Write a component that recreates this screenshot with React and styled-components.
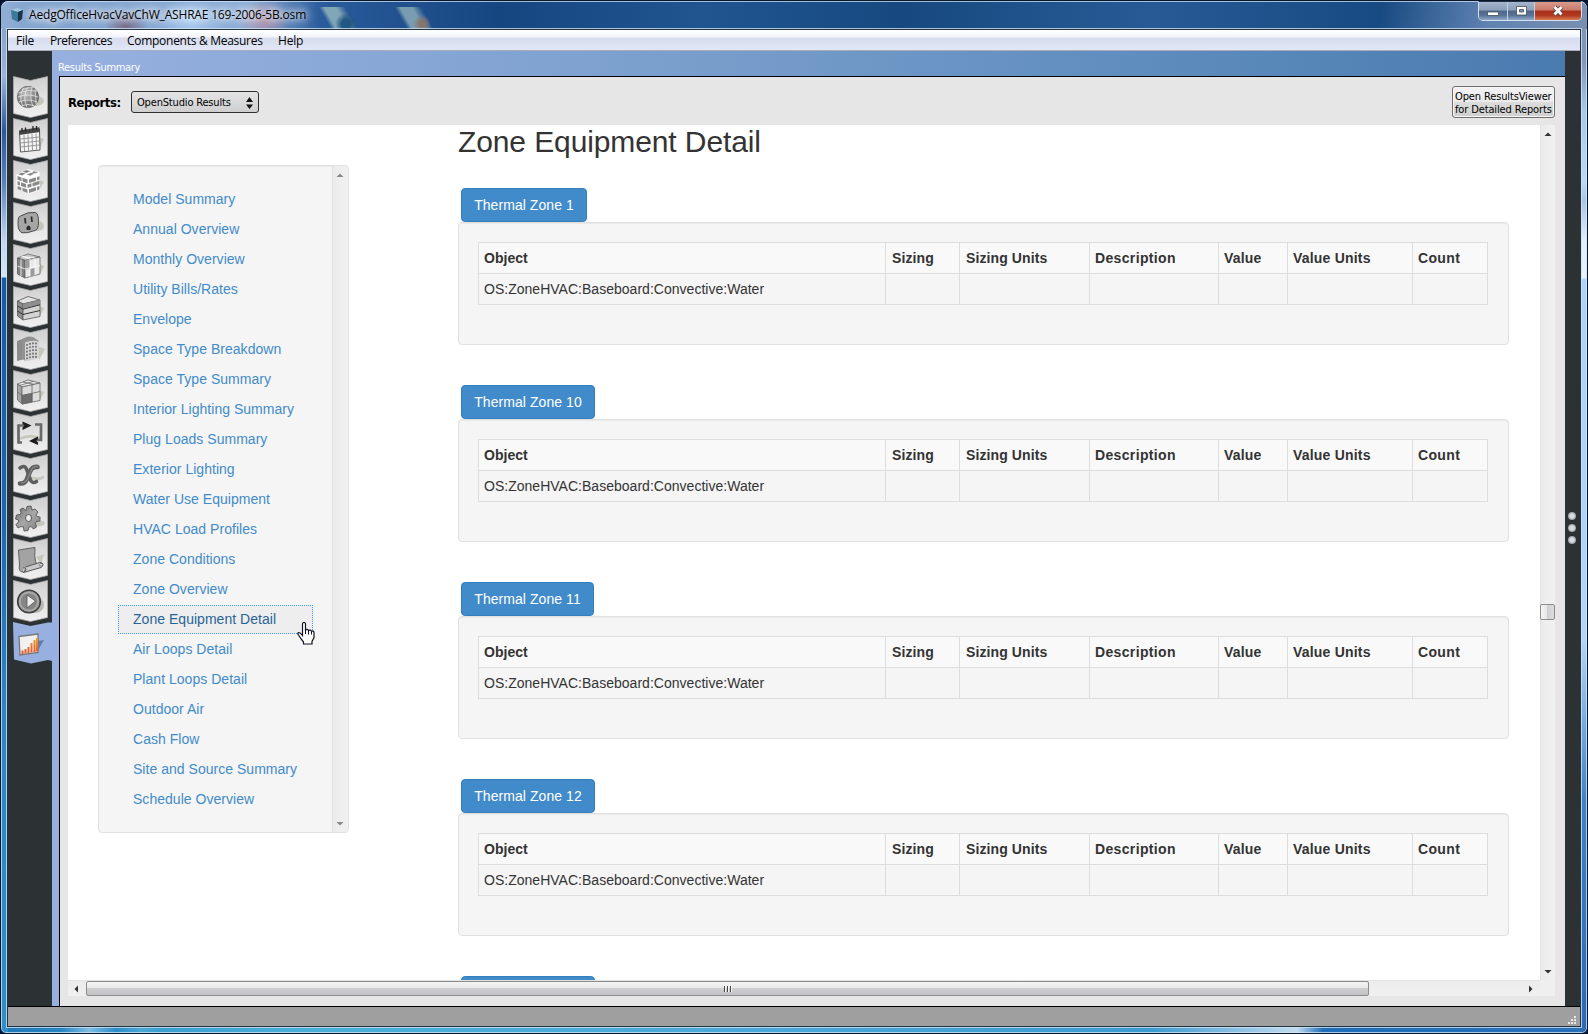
import React from "react";
import styled, { createGlobalStyle, css } from "styled-components";

const GlobalStyle = createGlobalStyle`
  * { box-sizing: border-box; }
  html, body { margin: 0; padding: 0; overflow: hidden; background: #04122e; }
`;

const segoe = css`font-family: "Open Sans", "Noto Sans", sans-serif;`;
const tahoma = css`font-family: "DejaVu Sans Condensed", "DejaVu Sans", sans-serif; font-stretch: condensed;`;
const arial = css`font-family: "Liberation Sans", Arial, sans-serif;`;

/* ---------- window frame ---------- */

const Window = styled.div`
  width: 1588px;
  height: 1034px;
  display: flex;
  flex-direction: column;
  overflow: hidden;
  padding: 0 7px 7px;
  border: 1px solid #0b1628;
  border-radius: 8px 8px 6px 6px;
  box-shadow: inset 0 0 0 1px rgba(215, 232, 250, 0.75);
  background:
    linear-gradient(180deg, #7f9cc6 0, #93abd0 50px, #9fb4d6 75px, #2f5898 130px, #5b80b6 180px, #c5d6ec 240px, #d5e4f4 276px, #185aa6 277px, #1b66ae 500px, #2b86c5 700px, #2d8fcb 100%) left top / 7px 100% no-repeat,
    linear-gradient(180deg, #8295b4 0, #7f97ba 60px, #a9c8ea 110px, #bcd9f7 180px, #a9c6e6 200px, #e3f0fb 240px, #e8f3fb 277px, #acd2f9 278px, #b2d5f8 640px, #3f83c6 800px, #2c6ab4 100%) right top / 7px 100% no-repeat,
    linear-gradient(90deg, #2079b8 0, #2685c2 60px, #7fbfe3 88px, #2b8cc8 115px, #4ba8d4 140px, #3aa0d0 160px, #48b0d8 300px, #4cabd9 700px, #3c9bd0 1150px, #c2dcf0 1296px, #1f6fba 1322px, #2a70ba 100%) left bottom / 100% 7px no-repeat,
    #1a4a86;
`;

const TitleBar = styled.header`
  height: 28px;
  flex: none;
  margin: 0 -7px;
  padding: 0 5px 0 9px;
  display: flex;
  align-items: flex-start;
  border-top: 1px solid rgba(210, 228, 248, 0.75);
  border-radius: 7px 7px 0 0;
  background:
    linear-gradient(90deg, rgba(150,178,215,.85) 0, rgba(150,178,215,.3) 20px, transparent 60px),
    radial-gradient(ellipse 22px 16px at 125px 24px, rgba(110,90,115,.8), transparent),
    radial-gradient(ellipse 34px 22px at 190px 18px, rgba(180,215,248,.85), transparent),
    radial-gradient(ellipse 26px 20px at 263px 18px, rgba(190,140,160,.8), transparent),
    radial-gradient(ellipse 11px 11px at 345px 22px, #20587f 40%, transparent),
    linear-gradient(60deg, transparent 24%, rgba(157,191,192,.75) 34%, rgba(157,191,192,.75) 56%, transparent 74%) 318px 5px / 40px 23px no-repeat,
    radial-gradient(ellipse 9px 9px at 421px 22px, #85756c 30%, transparent),
    linear-gradient(60deg, transparent 24%, rgba(150,181,189,.75) 34%, rgba(150,181,189,.75) 56%, transparent 74%) 394px 5px / 40px 23px no-repeat,
    linear-gradient(100deg, transparent 1360px, rgba(130,158,198,.65) 1470px, rgba(130,150,180,.9) 1570px),
    linear-gradient(90deg, #7fa0cc 0, #8fafd9 250px, #2a5b9b 320px, #164680 500px, #205590 700px, #174980 900px, #285a95 1150px, #174a82 1380px, #285690 100%);
`;

const AppIcon = styled.svg`
  width: 14px;
  height: 14px;
  margin-top: 6px;
`;

const Title = styled.div`
  ${segoe}
  margin: 4px auto 0 5px;
  font-size: 12px;
  line-height: 18px;
  letter-spacing: -0.18px;
  color: #000;
  white-space: nowrap;
  text-shadow: 0 0 7px #fff, 0 0 9px rgba(255,255,255,.9), 0 0 12px rgba(255,255,255,.7);
`;

const WindowButtons = styled.div`
  display: flex;
  height: 20px;
  margin-top: -1px;
  border: 1px solid #d5e0ec;
  border-top-color: #20314a;
  border-radius: 0 0 5px 5px;
  overflow: hidden;
`;

const WindowButton = styled.button`
  width: ${(p) => p.$width}px;
  height: 18px;
  padding: 0;
  border: 0;
  border-left: ${(p) => (p.$first ? "0" : "1px solid #c6d2e0")};
  display: grid;
  place-items: center;
  background: ${(p) =>
    p.$close
      ? "linear-gradient(#d99a8c 0, #c97a6a 45%, #a92d18 50%, #b23a20 75%, #d77a52 100%)"
      : "linear-gradient(#a5b5cb 0, #8b9fba 45%, #4e6789 50%, #5a7499 75%, #91a9c8 100%)"};
  svg { display: block; }
`;

const Client = styled.div`
  flex: 1;
  min-height: 0;
  display: flex;
  flex-direction: column;
  border: 1px solid #26323c;
  box-shadow: 0 0 0 1px rgba(205, 226, 246, 0.8);
  margin: 0 -1px -1px;
`;

const MenuBar = styled.nav`
  height: 21px;
  flex: none;
  display: flex;
  padding: 1px 0 0 8px;
  border-bottom: 1px solid #a7abbc;
  background: linear-gradient(#fff 0, #f3f5fb 7px, #d7dcee 8px, #e2e7f5 20px);
`;

const MenuItem = styled.span`
  ${segoe}
  width: ${(p) => p.$width}px;
  font-size: 12px;
  line-height: 20px;
  letter-spacing: ${(p) => p.$spacing}px;
  white-space: nowrap;
  color: #000;
`;

const Body = styled.div`
  flex: 1;
  min-height: 0;
  display: flex;
  background: #2c3234;
`;

const StatusBar = styled.footer`
  height: 20px;
  flex: none;
  display: flex;
  justify-content: flex-end;
  align-items: flex-end;
  padding: 0 3px 1px 0;
  border-top: 1px solid #000;
  background: #9f9f9f;
`;

/* ---------- tab strip ---------- */

const TabStrip = styled.aside`
  width: 44px;
  flex: none;
  padding: 25px 0 0 5px;
  display: flex;
  flex-direction: column;
`;

const Tab = styled.svg`
  width: 39px;
  height: 42px;
  flex: none;
  display: block;
`;

const Pane = styled.section`
  width: 1513px;
  flex: none;
  display: flex;
  flex-direction: column;
  padding-left: 7px;
  background: linear-gradient(90deg, #97b0df 0, #7fa2d0 35%, #5c8bbb 75%, #4a7bb0 100%) top / 100% 25px no-repeat, #97b0df;
`;

const PaneTitle = styled.div`
  ${tahoma}
  height: 25px;
  margin-left: -1px;
  padding-top: 9px;
  font-size: 11px;
  line-height: 16px;
  letter-spacing: -0.3px;
  color: #fff;
  white-space: nowrap;
`;

const PaneBody = styled.div`
  flex: 1;
  min-height: 0;
  display: flex;
  flex-direction: column;
  padding: 0 10px 10px 8px;
  border-left: 1px solid #000;
  border-top: 1px solid #000;
  background: #e6e6e6;
`;

const Toolbar = styled.div`
  height: 48px;
  flex: none;
  display: flex;
  align-items: center;
  padding-top: 2px;
`;

const ReportsLabel = styled.label`
  ${tahoma}
  width: 63px;
  font-size: 13px;
  font-weight: 700;
  letter-spacing: -0.45px;
  color: #000;
  white-space: nowrap;
`;

const Select = styled.button`
  ${tahoma}
  width: 128px;
  height: 22px;
  padding: 1px 5px 0 5px;
  display: flex;
  align-items: center;
  justify-content: space-between;
  border: 1px solid #2f2f2f;
  border-radius: 3px;
  background: linear-gradient(#e4e4e4, #cfcfcf);
  font-size: 11px;
  letter-spacing: -0.17px;
  color: #000;
  white-space: nowrap;
`;

const ViewerButton = styled.button`
  ${tahoma}
  width: 103px;
  height: 32px;
  margin: -1px 0 0 auto;
  padding: 2px 0 0 2px;
  border: 1px solid #707070;
  border-radius: 3px;
  box-shadow: inset 0 0 0 1px #f6f6f6;
  background: linear-gradient(#f2f2f2 0, #ebebeb 48%, #dcdcdc 52%, #cfcfcf 100%);
  font-size: 11px;
  line-height: 13px;
  letter-spacing: -0.13px;
  text-align: left;
  color: #000;
  white-space: nowrap;
  span { display: block; }
`;

/* ---------- report view ---------- */

const ViewGrid = styled.div`
  flex: 1;
  min-height: 0;
  display: grid;
  grid-template-columns: 1472px 15px;
  grid-template-rows: 855px 16px;
  background: #efefef;
`;

const Viewport = styled.div`
  ${arial}
  display: flex;
  align-items: flex-start;
  overflow: hidden;
  padding-left: 30px;
  background: #fff;
  color: #333;
`;

const SideNav = styled.nav`
  width: 251px;
  height: 668px;
  flex: none;
  margin-top: 40px;
  display: flex;
  border: 1px solid #e1e1e1;
  border-radius: 4px;
  background: #f5f5f5;
  box-shadow: inset 0 1px 1px rgba(0, 0, 0, 0.05);
`;

const NavList = styled.ul`
  flex: 1;
  margin: 0;
  padding: 19px 19px 0;
  list-style: none;
  display: flex;
  flex-direction: column;
  gap: 1px;
`;

const NavItem = styled.li`
  position: relative;
  width: 195px;
  height: 29px;
  padding-left: 14px;
  border: 1px ${(p) => (p.$active ? "dotted #3b99fc" : "solid transparent")};
  background: ${(p) => (p.$active ? "#eee" : "transparent")};
  color: ${(p) => (p.$active ? "#2a6496" : "#428bca")};
  font-size: 14px;
  line-height: 27px;
  letter-spacing: 0.03px;
  white-space: nowrap;
`;

const HandCursor = styled.svg`
  position: absolute;
  left: 178px;
  top: 16px;
  width: 18px;
  height: 23px;
`;

const VScroll = styled.div`
  width: ${(p) => (p.$nav ? 16 : 15)}px;
  display: flex;
  flex-direction: column;
  align-items: center;
  justify-content: space-between;
  padding: ${(p) => (p.$nav ? "5px 1px 4px 0" : "5px 0 4px")};
  border-left: 1px solid #e2e2e2;
  border-radius: ${(p) => (p.$nav ? "0 4px 4px 0" : "0")};
  background: linear-gradient(90deg, #ebebeb, #f1f1f1);
`;

const HScroll = styled.div`
  height: 16px;
  display: flex;
  align-items: center;
  padding: 0 5px 0 4px;
  border-top: 1px solid #e3e3e3;
  background: linear-gradient(#ececec, #f0f0f0);
`;

const Arrow = styled.svg`
  width: 8px;
  height: 8px;
  flex: none;
`;

const VThumb = styled.div`
  width: 15px;
  height: 16px;
  margin: 466px 0 auto -1px;
  border: 1px solid #8c8c8c;
  border-radius: 2px;
  background: linear-gradient(90deg, #f5f5f5 0, #e8e8e8 45%, #cfd0d2 50%, #dcdcdc 100%);
`;

const HThumb = styled.div`
  width: 1283px;
  height: 15px;
  margin: 0 auto 0 6px;
  display: flex;
  align-items: center;
  justify-content: center;
  gap: 2px;
  border: 1px solid #8c8c8c;
  border-radius: 2px;
  background: linear-gradient(#f5f5f5 0, #e9e9e9 42%, #d0d0d2 48%, #c2c2c5 100%);
`;

const GripLine = styled.i`
  width: 1px;
  height: 6px;
  background: #444;
  box-shadow: 1px 0 0 #fafafa;
`;

const Report = styled.main`
  width: 1051px;
  flex: none;
  margin-left: 109px;
`;

const Heading = styled.h1`
  margin: 0 0 30px;
  font-size: 30px;
  font-weight: 400;
  line-height: 33px;
  letter-spacing: -0.11px;
  color: #333;
`;

const Zone = styled.section`
  height: 197px;
`;

const ZoneButton = styled.button`
  ${arial}
  display: block;
  width: ${(p) => p.$width}px;
  height: 34px;
  margin-left: 3px;
  padding: 0;
  border: 1px solid #357ebd;
  border-radius: 4px;
  background: #428bca;
  color: #fff;
  font-size: 14px;
  line-height: 32px;
  letter-spacing: 0.06px;
  text-align: center;
  white-space: nowrap;
`;

const Well = styled.div`
  height: 123px;
  padding: 19px;
  border: 1px solid #e1e1e1;
  border-radius: 4px;
  background: #f5f5f5;
  box-shadow: inset 0 1px 1px rgba(0, 0, 0, 0.05);
`;

const Table = styled.table`
  width: 1010px;
  table-layout: fixed;
  border-collapse: separate;
  border-spacing: 0;
  border: solid #ddd;
  border-width: 1px 0 0 1px;
  font-size: 14px;
  line-height: 20px;
`;

const cell = css`
  height: 31px;
  padding: 5px 0 5px 5px;
  border: solid #ddd;
  border-width: 0 1px 1px 0;
  text-align: left;
  white-space: nowrap;
`;
const Th = styled.th`
  ${cell}
  width: ${(p) => p.$width}px;
  padding-left: ${(p) => p.$inset}px;
  background: #f9f9f9;
  font-weight: 700;
  letter-spacing: ${(p) => p.$spacing}px;
`;
const Td = styled.td`
  ${cell}
  letter-spacing: 0.02px;
`;

const RightRail = styled.aside`
  flex: 1;
  display: flex;
  flex-direction: column;
  align-items: center;
  gap: 4px;
  padding: 461px 2px 0 0;
`;

const Dot = styled.i`
  width: 8px;
  height: 8px;
  border-radius: 50%;
  background: radial-gradient(circle, #d8dbe0 35%, #8d9296 75%);
`;

/* ---------- tab drawings ---------- */

const S = "#5c5c5c";

const Globe = () => (
  <g>
    <ellipse cx="23" cy="25" rx="8" ry="5" fill="#c6c6bb" />
    <circle cx="15" cy="21" r="10.7" fill="url(#ball)" stroke="#6b6b6b" strokeWidth=".8" />
    <g fill="none" stroke="#e4e4e4" strokeWidth=".8">
      <path d="M5.500 17q9-4 18.500-2M5 21q10-4 20 0M6 26q9-4 18 0M9 29.500q6-2 12 0M9 13.500q6-2 11-2" />
      <path d="M15 10.800q-6 10-1 20.500M19 11.600q-3 10 1 18.500M10.500 12q-5 9-1 17.500M22 13.500q1 8 1 14.500" />
    </g>
  </g>
);

const Calendar = () => (
  <g>
    <path d="M25 19l6 2-5 11z" fill="#c6c6bb" />
    <path d="M6.500 14l20-3 .5 21-19.500 2z" fill="#f4f4f4" stroke={S} />
    <path d="M6 12.500l20.500-3.200.3 4.600L6.500 17z" fill="#444" />
    <path d="M9 10v4M12.500 9.500v4M20 8v4M23.500 8v4" stroke="#222" strokeWidth="1.300" />
    <g stroke="#909090" strokeWidth=".9" fill="none">
      <path d="M7 21l19.500-2M7 25l19.500-2M7 29l19.500-2M11 17l.5 16M15 16.500l.5 16M19 16l.5 16M23 15.500l.5 16" />
    </g>
  </g>
);

const Bricks = () => (
  <g>
    <path d="M25 19l6 3-5 8z" fill="#c6c6bb" />
    <path d="M3.500 14.500l11-5.500 12 3 .5 18-11 4-12.500-5.500z" fill="#fff" />
    <g fill="#8a8a8a">
      <path d="M5 14.200l3.500-1.800 4 1-3.500 2zM9.500 11.800l4-1.900 4 1-4 2zM13.800 14.500l4-1.800 3.500.8-4 2.200zM18.500 12.200l2.500-1 4 1-3 1.400z" />
      <path d="M4.500 16l4 1.500v3.800l-4-1.500zM9.500 17.800l5 1.700v3.700l-5-1.700zM4.500 21l2.500 1v3.800l-2.500-1zM8 22.300l5 1.700v3.800l-5-1.700zM4.500 26l3.800 1.400v3L4.500 29zM9.500 27.800l5 1.700v3.500l-5-2z" />
      <path d="M16 19.500l7-2.200v3.600l-7 2.200zM24 17l2.500-.8v3.600L24 20.600zM14.500 24.500l4-1.300v3.600l-4 1.300zM19.500 22.900l7-2.200v3.600l-7 2.200zM16 29.300l7-2.200v3.600l-7 2.300zM24 26.800l2.500-.8v3.500L24 30.400z" />
    </g>
  </g>
);

const Outlet = () => (
  <g>
    <ellipse cx="25" cy="24" rx="6" ry="5" fill="#c6c6bb" />
    <path d="M7.500 14q7.500-4.500 14.500-3.500 3.500.5 3.500 9T22 28.500q-8 3-13 2.300Q5 29 5 21.500t2.500-7.500z" fill="#a6a6a6" stroke="#4a4a4a" />
    <path d="M12 16l.5 5.500M18.500 14.500l.5 5.500" stroke="#2a2a2a" strokeWidth="1.700" />
    <path d="M13.500 28v-2.500q2-4 4 0V28z" fill="#2a2a2a" />
  </g>
);

const CubeShadow = () => <path d="M26 20l5.500 2-5.500 9z" fill="#c6c6bb" />;

const CubeParts = () => (
  <g strokeWidth=".8">
    <CubeShadow />
    <path d="M4.500 14L15 10l12 3-15 3.500z" fill="#c8c8c8" stroke="#666" />
    <path d="M4.500 14l7.500 2.500V34l-7.500-4z" fill="#808080" stroke="#555" />
    <path d="M12 16.500L27 13v17l-15 4z" fill="#e8e8e8" stroke="#666" />
    <path d="M12 17l5-1.200v9L12 26zM17 25l5-1.300v7.800L17 32.700z" fill="#9c9c9c" />
    <path d="M8 15.200v17M4.500 22l7.500 3 15-3.500M17 15.300v17.300M22 14v17.300M8.500 12.500l13 1.500M17 15.200l-7.500-2.800" stroke="#fff" fill="none" />
  </g>
);

const CubeStack = () => (
  <g stroke="#555" strokeWidth=".8">
    <g stroke="none"><CubeShadow /></g>
    <path d="M4.500 15L15 10.500 27 14l-17 4z" fill="#e2e2e2" />
    <path d="M4.500 15l5.500 3v16l-5.500-4z" fill="#8c8c8c" />
    <path d="M10 18l17-4v16.500L10 34z" fill="#d4d4d4" />
    <path d="M10 18l17-4v4.500L10 22.500z" fill="#8e8e8e" stroke="none" />
    <path d="M4.500 20l5.500 3.200 17-4.400M4.500 25l5.500 3.500 17-4" fill="none" stroke="#333" strokeWidth="1" />
  </g>
);

const Building = () => (
  <g>
    <path d="M24 18l8 3-6 11z" fill="#c6c6bb" />
    <path d="M4 13l8-3v21l-8 2z" fill="#8b8b8b" />
    <path d="M9 12q4-5 11-3l6 4-1 17-13 3-3-3z" fill="#929292" />
    <path d="M12 14.500q7-3 14-1v17L12 33.500z" fill="#d5d5d5" />
    <path d="M14 16v16M17 15v17M20 14.500v17M23 14.500v16" stroke="#555" strokeWidth="1.400" strokeDasharray="1.700 1.700" />
  </g>
);

const CubeQuarter = () => (
  <g stroke="#666" strokeWidth=".8">
    <g stroke="none"><CubeShadow /></g>
    <path d="M4.500 14L15 10l12 3-18 4z" fill="#ececec" />
    <path d="M4.500 14l4.500 3v17l-4.500-4z" fill="#a5a5a5" />
    <path d="M9 17l18-4v17.500L9 34z" fill="#dcdcdc" />
    <path d="M9 25.500l10-2V32L9 34z" fill="#6d6d6d" />
    <path d="M4.500 21.800L9 25.500l18-4M19 14.800V32M10 12l11 2.300M20.500 11.400L6.500 15.500" fill="none" />
  </g>
);

const Loops = () => (
  <g fill="none">
    <path d="M7 27q8-5 21-1" stroke="#c6c6bb" strokeWidth="2.500" />
    <path d="M9 30.500H5.500v-17H12M22 12.500h6V28h-6" stroke="#696969" strokeWidth="2.700" />
    <path d="M9.500 9.500l9 4-9 4.500v-2.500l2-2-2-1.500zM25 24.500l-9 4.500 9 4v-2.500l-2-2 2-1.500z" fill="#1c1c1c" />
  </g>
);

const Fan = () => (
  <g fill="none" strokeLinecap="round">
    <path d="M19 24q9 2 11-1" stroke="#c6c6bb" strokeWidth="2.500" />
    <path d="M24.500 13q-5-1-7.500 4.500L13.500 26q-2 4-6.500 3.500" stroke="#5e5e5e" strokeWidth="4.600" />
    <path d="M7 14q4.500-3.500 6.500 1l4 11q2 4 6 1.500" stroke="#5e5e5e" strokeWidth="3.600" />
    <path d="M24 12.500q-4-.500-6 4.500L14.500 25q-2 4-6 4" stroke="#8a8a8a" strokeWidth="1.300" />
  </g>
);

const Gear = () => (
  <g>
    <path d="M22 25q9-1 10 2-1 4-11 3z" fill="#c6c6bb" />
    <path d="M13 14.500l1-4 4-.5 1 4 3-1 3 3-2 3 1 1.500 3 .5v4l-3.500.5-1 2 1 3.500-3 2-2.500-2.500-2 .5-1 3.500-4 .5-.5-4-2.500-.5-3 1.500-2-3.500 2.500-2.500v-2l-3-1 1-4 3.500-.5 1-2-1-3 3-1.500z" fill="url(#steel)" stroke="#555" strokeWidth=".9" />
    <ellipse cx="15.500" cy="22" rx="3" ry="3.600" fill="#eaeaea" stroke="#555" />
  </g>
);

const Scroll = () => (
  <g>
    <path d="M23 19l8-3-3 10z" fill="#c6c6bb" />
    <path d="M5.500 12l16.500-2.500q-1 9 1 16l-13 8.500Q5 34 6.500 27z" fill="#a3a3a3" stroke="#555" strokeWidth=".9" />
    <path d="M10 34.500q3-1 3-3.500-1-2-3-1M12.500 29l14-4.500q3.500 0 3.500 2T28 29.500L10.500 34.500" fill="#c9c9c9" stroke="#555" />
    <circle cx="28" cy="26.800" r="1.400" fill="#eee" stroke="#555" strokeWidth=".7" />
  </g>
);

const Play = () => (
  <g>
    <ellipse cx="22" cy="25" rx="9" ry="8" fill="#b9b9b3" />
    <circle cx="16" cy="21.500" r="11.300" fill="#a0a0a0" stroke="#404040" strokeWidth="1.600" />
    <circle cx="16" cy="21.500" r="8.800" fill="#858585" stroke="#bbb" strokeWidth=".7" />
    <path d="M14 15l8.500 6L14 28z" fill="#eee" stroke="#555" strokeWidth=".8" />
  </g>
);

const Chart = () => (
  <g>
    <path d="M24 19l7-1-7 12z" fill="#617da8" />
    <path d="M6 14.500L25 12v18.500L7 33z" fill="#f1f1f1" stroke="#777" strokeWidth="1.300" />
    <path d="M9.500 32v-3.500M12.500 31.500V27M15.500 31v-6M18.500 30.500v-9.500M21.500 30V18M24 29.500V16" stroke="url(#fire)" strokeWidth="2" />
  </g>
);

const tabs = [Globe, Calendar, Bricks, Outlet, CubeParts, CubeStack, Building, CubeQuarter, Loops, Fan, Gear, Scroll, Play];

const SharedPaints = () => (
  <defs>
    <linearGradient id="tile" x1="0" y1="0" x2="0" y2="1">
      <stop offset="0" stopColor="#cfcfcf" />
      <stop offset=".5" stopColor="#e2e2e2" />
      <stop offset="1" stopColor="#f0f0f0" />
    </linearGradient>
    <radialGradient id="ball" cx=".4" cy=".35">
      <stop offset="0" stopColor="#c4c4c4" />
      <stop offset="1" stopColor="#777" />
    </radialGradient>
    <linearGradient id="steel" x1="0" y1="0" x2="1" y2="1">
      <stop offset="0" stopColor="#6d6d6d" />
      <stop offset=".5" stopColor="#a8a8a8" />
      <stop offset="1" stopColor="#7d7d7d" />
    </linearGradient>
    <linearGradient id="fire" gradientUnits="userSpaceOnUse" x1="0" y1="15" x2="0" y2="32">
      <stop offset="0" stopColor="#f3a52c" />
      <stop offset="1" stopColor="#e2502c" />
    </linearGradient>
  </defs>
);

/* ---------- data ---------- */

const navItems = [
  "Model Summary", "Annual Overview", "Monthly Overview", "Utility Bills/Rates", "Envelope",
  "Space Type Breakdown", "Space Type Summary", "Interior Lighting Summary", "Plug Loads Summary",
  "Exterior Lighting", "Water Use Equipment", "HVAC Load Profiles", "Zone Conditions", "Zone Overview",
  "Zone Equipment Detail", "Air Loops Detail", "Plant Loops Detail", "Outdoor Air", "Cash Flow",
  "Site and Source Summary", "Schedule Overview",
];

const columns = [
  { label: "Object", width: 407, inset: 5, spacing: 0.02 },
  { label: "Sizing", width: 74, inset: 6, spacing: 0.1 },
  { label: "Sizing Units", width: 130, inset: 6, spacing: 0.1 },
  { label: "Description", width: 129, inset: 5, spacing: 0.35 },
  { label: "Value", width: 69, inset: 5, spacing: 0.2 },
  { label: "Value Units", width: 125, inset: 5, spacing: 0.2 },
  { label: "Count", width: 75, inset: 5, spacing: 0.35 },
];

const zones = [
  { name: "Thermal Zone 1", width: 126 },
  { name: "Thermal Zone 10", width: 134 },
  { name: "Thermal Zone 11", width: 133 },
  { name: "Thermal Zone 12", width: 134 },
];

const arrows = { up: "M.500 6L4 2.500l3.500 3.500z", down: "M.500 2h7L4 5.500z", left: "M6 .500v7L2.500 4z", right: "M2 .500v7L5.500 4z" };
const ScrollArrow = ({ dir, color = "#333" }) => (
  <Arrow viewBox="0 0 8 8"><path d={arrows[dir]} fill={color} /></Arrow>
);

const ZoneSection = ({ name, width }) => (
  <Zone>
    <ZoneButton $width={width}>{name}</ZoneButton>
    <Well>
      <Table>
        <thead>
          <tr>
            {columns.map((c) => (
              <Th key={c.label} $width={c.width} $inset={c.inset} $spacing={c.spacing}>{c.label}</Th>
            ))}
          </tr>
        </thead>
        <tbody>
          <tr>{columns.map((c, i) => <Td key={c.label}>{i === 0 ? "OS:ZoneHVAC:Baseboard:Convective:Water" : ""}</Td>)}</tr>
        </tbody>
      </Table>
    </Well>
  </Zone>
);

export default function App() {
  return (
    <>
      <GlobalStyle />
      <Window>
        <TitleBar>
          <AppIcon viewBox="0 0 14 14">
            <path d="M1 2l6-2 6 2-5 2z" fill="#9fc6da" />
            <path d="M1 2l7 2v10l-6-3z" fill="#3c7897" />
            <path d="M8 4l5-2-1 9-4 3z" fill="#173349" />
          </AppIcon>
          <Title>AedgOfficeHvacVavChW_ASHRAE 169-2006-5B.osm</Title>
          <WindowButtons>
            <WindowButton $width={28} $first>
              <svg width="12" height="14"><path d="M.500 8h11v3.500H.500z" fill="#fff" stroke="#444e60" strokeWidth=".8" /></svg>
            </WindowButton>
            <WindowButton $width={27}>
              <svg width="13" height="12"><path d="M1.500 1.500h10v8.500h-10z" fill="#fff" stroke="#444e60" strokeWidth=".8" /><path d="M4.500 4.500h4v2.500h-4z" fill="#8193ad" stroke="#444e60" strokeWidth=".8" /></svg>
            </WindowButton>
            <WindowButton $width={47} $close>
              <svg width="12" height="12"><path d="M2.500 2l7 7.500M9.500 2l-7 7.500" stroke="#55434a" strokeWidth="4.600" /><path d="M2.500 2l7 7.500M9.500 2l-7 7.500" stroke="#fff" strokeWidth="2.800" /></svg>
            </WindowButton>
          </WindowButtons>
        </TitleBar>
        <Client>
          <MenuBar>
            <MenuItem $width={34} $spacing={-0.25}>File</MenuItem>
            <MenuItem $width={77} $spacing={-0.45}>Preferences</MenuItem>
            <MenuItem $width={151} $spacing={-0.28}>Components &amp; Measures</MenuItem>
            <MenuItem $width={40} $spacing={-0.2}>Help</MenuItem>
          </MenuBar>
          <Body>
            <TabStrip>
              {tabs.map((Drawing, i) => (
                <Tab key={i} viewBox="0 0 39 42">
                  {i === 0 && <SharedPaints />}
                  <path d="M.500.500L17.500 4.500 34.500.500V37.500L17.500 41.500.500 37.500z" fill="url(#tile)" stroke="#a9a9a9" strokeWidth=".8" />
                  <Drawing />
                </Tab>
              ))}
              <Tab viewBox="0 0 39 42">
                <path d="M0 0L17.500 4 35 .500H39V39L35 38 18 41.500 1 37.500z" fill="#97b0df" />
                <Chart />
              </Tab>
            </TabStrip>
            <Pane>
              <PaneTitle>Results Summary</PaneTitle>
              <PaneBody>
                <Toolbar>
                  <ReportsLabel>Reports:</ReportsLabel>
                  <Select>
                    OpenStudio Results
                    <svg width="7" height="12"><path d="M0 5L3.500 0 7 5zM0 7.500h7L3.500 12z" fill="#111" /></svg>
                  </Select>
                  <ViewerButton><span>Open ResultsViewer</span><span>for Detailed Reports</span></ViewerButton>
                </Toolbar>
                <ViewGrid>
                  <Viewport>
                    <SideNav>
                      <NavList>
                        {navItems.map((label, i) => (
                          <NavItem key={label} $active={i === 14}>
                            {label}
                            {i === 14 && (
                              <HandCursor viewBox="0 0 18 23">
                                <path d="M5.500 12.500V2q0-1.500 1.500-1.500T8.500 2v6q2-1.500 3 .5 2-1 3 .8 2-.8 2.500 1v5.200l-2 4v2.500H6.500V20Q4 17 1.500 13q-1.500-2 .2-2.500 1.500 0 3.800 3z" fill="#fff" stroke="#101020" strokeWidth="1.200" />
                                <path d="M8.500 7v5M11.500 8.500v4M14.500 9.500v3" stroke="#101020" />
                              </HandCursor>
                            )}
                          </NavItem>
                        ))}
                      </NavList>
                      <VScroll $nav>
                        <ScrollArrow dir="up" color="#888" />
                        <ScrollArrow dir="down" color="#888" />
                      </VScroll>
                    </SideNav>
                    <Report>
                      <Heading>Zone Equipment Detail</Heading>
                      {zones.map((z) => <ZoneSection key={z.name} name={z.name} width={z.width} />)}
                      <ZoneButton $width={134} />
                    </Report>
                  </Viewport>
                  <VScroll>
                    <ScrollArrow dir="up" />
                    <VThumb />
                    <ScrollArrow dir="down" />
                  </VScroll>
                  <HScroll>
                    <ScrollArrow dir="left" />
                    <HThumb><GripLine /><GripLine /><GripLine /></HThumb>
                    <ScrollArrow dir="right" />
                  </HScroll>
                </ViewGrid>
              </PaneBody>
            </Pane>
            <RightRail><Dot /><Dot /><Dot /></RightRail>
          </Body>
          <StatusBar>
            <svg width="9" height="9">
              <path d="M6 0h2v2H6zM3 3h2v2H3zM6 3h2v2H6zM0 6h2v2H0zM3 6h2v2H3zM6 6h2v2H6z" fill="#e8e8e8" />
            </svg>
          </StatusBar>
        </Client>
      </Window>
    </>
  );
}
